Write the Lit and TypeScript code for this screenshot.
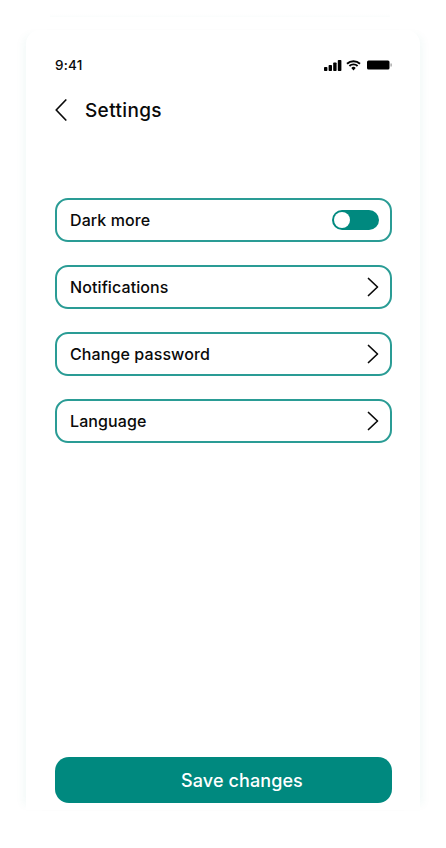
import { LitElement, html, css } from "lit";
import { customElement } from "lit/decorators.js";

const chevron = html`<svg class="chev" viewBox="0 0 12 20" width="12" height="20"><path d="M1.5 1.5 L10.5 10 L1.5 18.5" fill="none" stroke="#0a0a0a" stroke-width="1.7" stroke-linecap="round" stroke-linejoin="round"/></svg>`;

@customElement("app-root")
export class AppRoot extends LitElement {
  static styles = css`
    :host { display: block; width: 446px; height: 848px; background: #fff; overflow: hidden; font-family: Inter, "Liberation Sans", sans-serif; color: #0a0a0a; }
    .page { height: 848px; padding: 30px 26px 38px; box-sizing: border-box; display: flex; position: relative; }
    .page::before { content: ""; position: absolute; left: 50px; top: 14px; width: 340px; height: 3px; background: linear-gradient(to bottom, rgba(0,137,123,0), rgba(0,137,123,.02)); }
    .phone { flex: 1; background: #fff; border-radius: 14px 14px 0 0; box-shadow: -8px 0 9px -5px rgba(0,137,123,.05), 8px 0 9px -5px rgba(0,137,123,.05); padding: 27px 28px 7px 29px; display: flex; flex-direction: column; box-sizing: border-box; }
    .status { display: flex; align-items: center; justify-content: space-between; height: 16px; }
    .time { font-size: 13.5px; font-weight: 500; letter-spacing: .2px; }
    .icons { display: flex; align-items: center; gap: 4px; }
    .header { display: flex; align-items: center; gap: 18px; height: 30px; margin-top: 22px; }
    .header svg { display: block; }
    .header h1 { margin: 0; font-size: 19px; font-weight: 500; letter-spacing: .35px; }
    .list { display: flex; flex-direction: column; gap: 23px; margin-top: 73px; }
    .row { height: 44px; box-sizing: border-box; border: 2px solid #2a9c95; border-radius: 13px; padding: 0 11px 0 13px; display: flex; align-items: center; justify-content: space-between; font-size: 16px; font-weight: 500; letter-spacing: .1px; }
    .toggle { width: 47px; height: 20px; border-radius: 10px; background: #00897f; position: relative; }
    .knob { position: absolute; left: 2px; top: 2px; width: 16px; height: 16px; border-radius: 50%; background: #fff; }
    .chev { display: block; }
    .spacer { flex: 1; }
    .save { height: 46px; border: none; border-radius: 14px; background: #00897f; color: #fff; font: 500 18px Inter, "Liberation Sans", sans-serif; letter-spacing: .1px; padding: 0 0 0 37px; }
  `;

  render() {
    return html`<div class="page"><div class="phone">
      <div class="status">
        <span class="time">9:41</span>
        <span class="icons">
          <svg width="18" height="11" viewBox="0 0 18 11"><rect x="0" y="7" width="3.4" height="4" rx=".8"/><rect x="4.6" y="5" width="3.4" height="6" rx=".8"/><rect x="9.2" y="2.5" width="3.4" height="8.5" rx=".8"/><rect x="13.8" y="0" width="3.6" height="11" rx=".8"/></svg>
          <svg width="15" height="11" viewBox="0 0 15 11"><path d="M1 3.8 A9.5 9.5 0 0 1 14 3.8 M3.4 6 A6 6 0 0 1 11.6 6" fill="none" stroke="#000" stroke-width="1.9"/><path d="M5.3 8 A3 3 0 0 1 9.7 8 L7.5 10.6 Z"/></svg>
          <svg width="25" height="10" viewBox="0 0 25 10" style="margin-left:2px"><rect x="0" y="0.5" width="22.5" height="9" rx="1.5"/><rect x="23.5" y="3.5" width="1.2" height="3" fill="#999"/></svg>
        </span>
      </div>
      <div class="header">
        <svg width="12" height="22" viewBox="0 0 12 22"><path d="M10.8 1 L1.2 11 L10.8 21" fill="none" stroke="#0a0a0a" stroke-width="1.7" stroke-linecap="round" stroke-linejoin="round"/></svg>
        <h1>Settings</h1>
      </div>
      <div class="list">
        <div class="row"><span>Dark more</span><span class="toggle"><span class="knob"></span></span></div>
        <div class="row"><span>Notifications</span>${chevron}</div>
        <div class="row"><span>Change password</span>${chevron}</div>
        <div class="row"><span>Language</span>${chevron}</div>
      </div>
      <div class="spacer"></div>
      <button class="save">Save changes</button>
    </div></div>`;
  }
}
